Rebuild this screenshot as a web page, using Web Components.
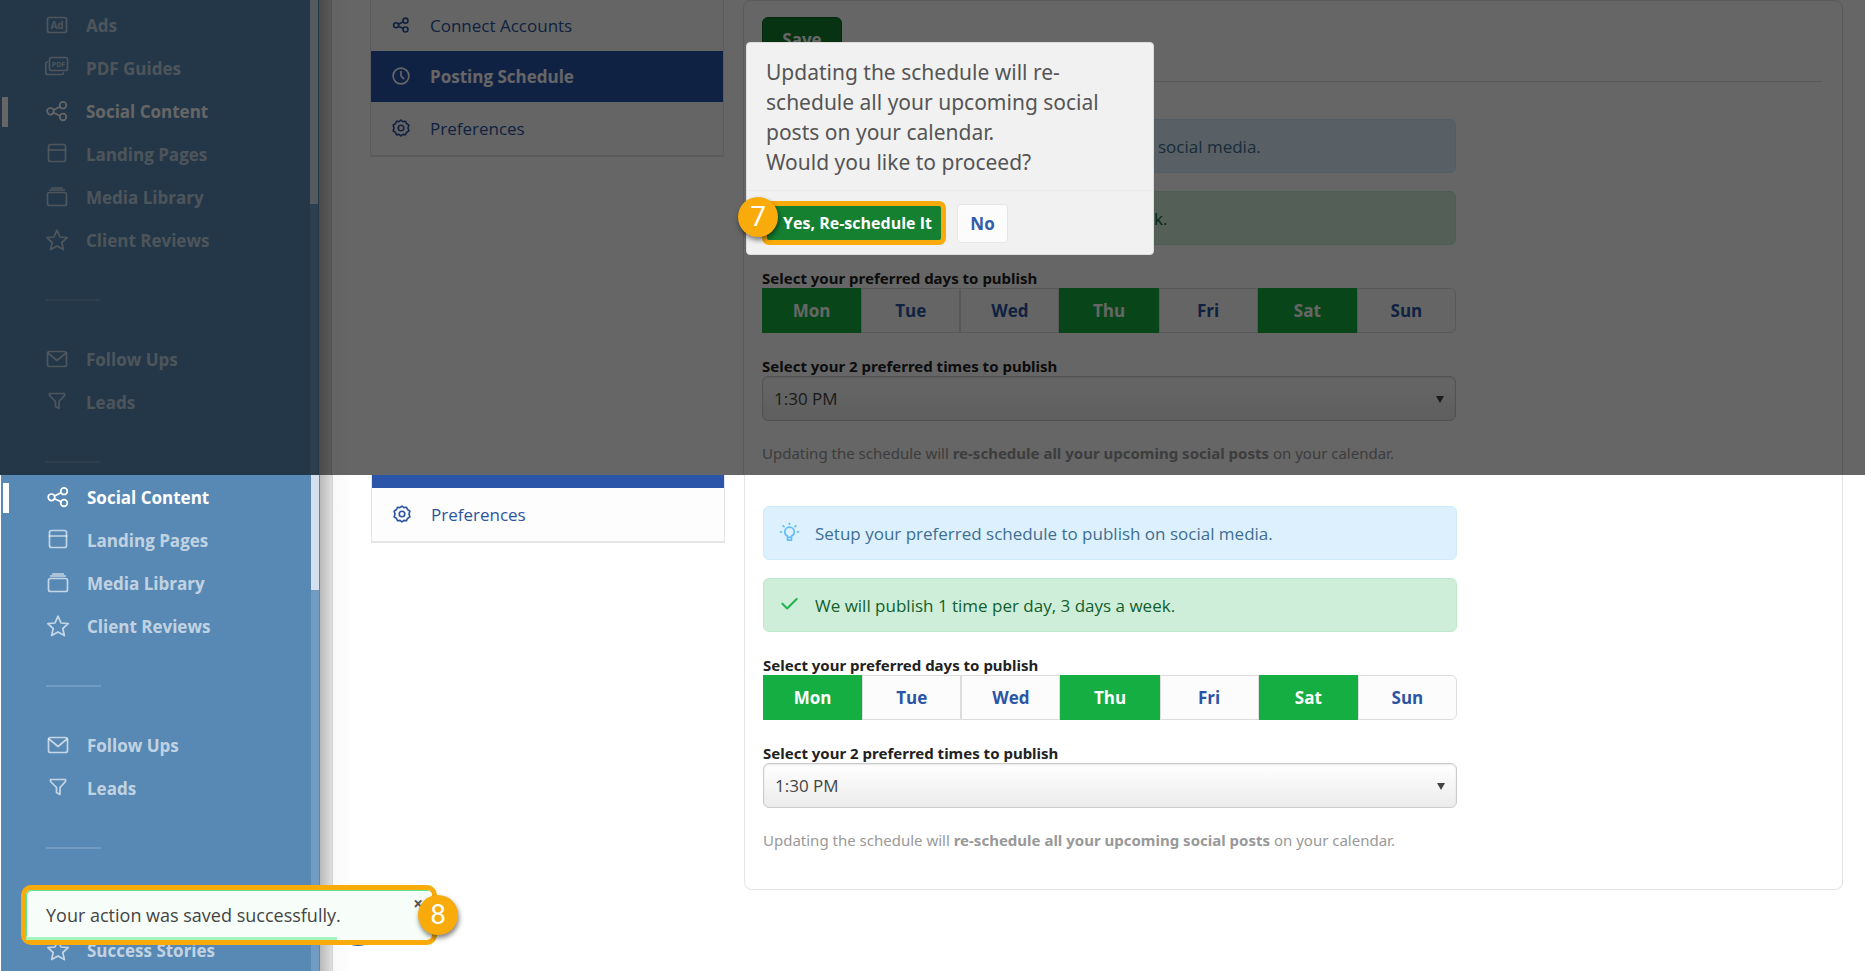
<!DOCTYPE html>
<html lang="en">
<head>
    <meta charset="utf-8">
    <title>Posting Schedule</title>
    <style>
        html, body {
            margin: 0;
            min-height: 100%;
        }
        body {
            display: flex;
            flex-direction: column;
            min-height: 100vh;
            position: relative;
            overflow: hidden;
            background: #fff;
            color: #222;
            font-family: "Open Sans", "Noto Sans", sans-serif;
            font-size: 17px;
        }
        app-pane.last {
            flex: 1;
        }
    </style>
</head>
<body>
    <app-pane dimmed>
        <side-nav slot="nav" thumb="204">
            <nav-item icon="ads">Ads</nav-item>
            <nav-item icon="pdf">PDF Guides</nav-item>
            <nav-item icon="share" active>Social Content</nav-item>
            <nav-item icon="page">Landing Pages</nav-item>
            <nav-item icon="media">Media Library</nav-item>
            <nav-item icon="star">Client Reviews</nav-item>
            <nav-rule></nav-rule>
            <nav-item icon="mail">Follow Ups</nav-item>
            <nav-item icon="funnel">Leads</nav-item>
            <nav-rule></nav-rule>
        </side-nav>
        <sub-menu slot="menu">
            <menu-item icon="share">Connect Accounts</menu-item>
            <menu-item icon="clock" active>Posting Schedule</menu-item>
            <menu-item icon="gear">Preferences</menu-item>
        </sub-menu>
        <schedule-card full>
            <notice-box covered>social media.</notice-box>
            <notice-box covered type="ok">k.</notice-box>
        </schedule-card>
    </app-pane>

    <app-pane class="last">
        <side-nav slot="nav" thumb="115" class="low">
            <nav-item icon="share" active>Social Content</nav-item>
            <nav-item icon="page">Landing Pages</nav-item>
            <nav-item icon="media">Media Library</nav-item>
            <nav-item icon="star">Client Reviews</nav-item>
            <nav-rule></nav-rule>
            <nav-item icon="mail">Follow Ups</nav-item>
            <nav-item icon="funnel">Leads</nav-item>
            <nav-rule></nav-rule>
            <nav-gap></nav-gap>
            <nav-item icon="star">Success Stories</nav-item>
        </side-nav>
        <sub-menu slot="menu" tail>
            <menu-item icon="gear">Preferences</menu-item>
        </sub-menu>
        <schedule-card>
            <notice-box>Setup your preferred schedule to publish on social media.</notice-box>
            <notice-box type="ok">We will publish 1 time per day, 3 days a week.</notice-box>
        </schedule-card>
    </app-pane>

    <confirm-dialog>
        <span>Updating the schedule will re-schedule all your upcoming social posts on your calendar.<br>Would you like to proceed?</span>
        <span slot="yes">Yes, Re-schedule It</span>
        <span slot="no">No</span>
    </confirm-dialog>
    <toast-note>Your action was saved successfully.</toast-note>

    <script>
        const ICONS = {
            ads: `<rect x="2.5" y="4.5" width="19" height="15" rx="2"/>
                <text x="12" y="16" text-anchor="middle" font-size="10" font-weight="700" fill="currentColor" stroke="none">Ad</text>`,
            pdf: `<rect x="4.5" y="1.5" width="18" height="13" rx="2"/><path d="M2.5 6Q.8 6 .8 7.7V16.5Q.8 18.500 2.8 18.5H17Q18.5 18.5 18.5 17"/>
                <text x="13.5" y="10.5" text-anchor="middle" font-size="7" font-weight="700" fill="currentColor" stroke="none">PDF</text>`,
            share: `<circle cx="5.5" cy="12.3" r="3.3"/><circle cx="18" cy="6.2" r="3.3"/><circle cx="18" cy="18" r="3.3"/>
                <path d="M8.5 10.9 15 7.7M8.5 13.7 15 16.7"/>`,
            page: `<rect x="3.5" y="2.5" width="17" height="17" rx="2"/><path d="M3.5 8H20.5"/>`,
            media: `<rect x="2.5" y="7.5" width="19" height="13" rx="2"/><path d="M4.5 5H19.5M6.5 3H17.5" stroke-width="1.3"/>`,
            star: `<path d="M12 2.2 15 9 22.2 9.7 16.8 14.5 18.4 21.6 12 17.9 5.6 21.6 7.2 14.5 1.8 9.7 9 9Z"/>`,
            mail: `<rect x="2.5" y="4.5" width="19" height="15" rx="2"/><path d="M3 6 12 13.5 21 6"/>`,
            funnel: `<path d="M4.5 3.5H19.5V5.5L14 11.5V18.5L10.5 16.5V11.5L4.5 5.5Z"/>`,
            clock: `<circle cx="12" cy="12" r="10.5"/><path d="M12 6V12L15.5 15.5"/>`,
            gear: `<path d="M12 1.5 14.7 3.5 18 3 19.3 6 22.500 8.2 21.3 12 22.5 15.8 19.3 18 18 21 14.7 20.5 12 22.5 9.3 20.5 6 21 4.7 18 1.5 15.8 2.7 12 1.5 8.2 4.7 6 6 3 9.3 3.5Z"/><circle cx="12" cy="12" r="3.7"/>`,
            bulb: `<path d="M9.5 18V16.5Q6 14.8 6 11.3A6 6 0 0 1 18 11.3Q18 14.8 14.5 16.5V18ZM9.5 18V21.5H14.5V18M12 .5V1.5M4 3.5 5 4.500M20 3.5 19 4.5M.8 11.3H1.8M22.2 11.3H23.2"/>`,
            check: `<path d="M3 11 9 17 21 5"/>`,
            caret: `<path d="M0 3H24L12 24Z" fill="currentColor" stroke="none"/>`
        };

        // Every element keeps its own markup and styles in an open shadow root
        function define(name, render, ready) {
            customElements.define(name, class extends HTMLElement {
                connectedCallback() {
                    if (this.shadowRoot) return;
                    this.attachShadow({ mode: 'open' }).innerHTML = render(this);
                    if (ready) ready(this.shadowRoot, this);
                }
            });
        }

        define('ui-icon', el => `
            <style>
                :host { display: block; width: 24px; height: 24px; flex: none; }
                svg { display: block; width: 100%; height: 100%; overflow: visible; fill: none; stroke: currentColor; stroke-width: var(--stroke, 1.7); stroke-linecap: round; stroke-linejoin: round; }
            </style>
            <svg viewBox="0 0 24 24" aria-hidden="true">${ICONS[el.getAttribute('name')]}</svg>`);

        define('app-pane', el => `
            <style>
                :host { display: grid; grid-template-columns: 319px 1fr; position: relative; overflow: hidden; padding-left: 1px; }
                :host([dimmed]) { height: 475px; padding-left: 0; }
                .page {
                    display: grid; grid-template-columns: 354px 1fr; gap: 19px; align-items: start;
                    padding: 0 22px 0 51px;
                    background: linear-gradient(to right, #b9b9b9, #dedede 12px, #d2d2d2 12px, #d2d2d2 13px, #f8f8f8 13px, #fff 32px);
                }
                .shade { position: absolute; inset: 0; background: rgba(0, 0, 0, .6); }
            </style>
            <slot name="nav"></slot>
            <main class="page"><slot name="menu"></slot><slot></slot></main>
            ${el.hasAttribute('dimmed') ? '<div class="shade"></div>' : ''}`);

        define('side-nav', el => `
            <style>
                :host { display: grid; grid-template-columns: 1fr 8px; padding-right: 1px; background: #5889b4; color: #fff; }
                nav { padding-top: 4px; }
                :host(.low) nav { padding-top: 1px; }
                .track { background: #729bc2; }
                .thumb { height: ${el.getAttribute('thumb')}px; background: #d4e0ed; }
            </style>
            <nav><slot></slot></nav>
            <div class="track"><div class="thumb"></div></div>`);

        define('nav-item', el => `
            <style>
                :host { display: block; }
                a {
                    display: flex; align-items: center; height: 43px; padding-left: 2px;
                    color: rgba(255, 255, 255, .65); font-weight: 700; text-decoration: none;
                }
                a::before { content: ""; width: 6px; height: 30px; margin-right: 37px; }
                :host([active]) a { color: #fff; }
                :host([active]) a::before { background: #fff; }
                ui-icon { margin-right: 17px; padding-bottom: 2px; }
            </style>
            <a href="#"><ui-icon name="${el.getAttribute('icon')}"></ui-icon><slot></slot></a>`);

        define('nav-rule', () => `
            <style>
                :host { display: block; padding: 37px 0 37px 45px; }
                div { width: 55px; height: 2px; background: #729bc2; }
            </style>
            <div></div>`);

        define('nav-gap', () => `<style>:host { display: block; height: 43px; }</style>`);

        define('sub-menu', () => `
            <style>
                :host { display: block; border: 1px solid #e4e4e4; border-top: 0; border-bottom-width: 2px; background: #fdfdfd; }
                :host([tail])::before { content: ""; display: block; height: 13px; background: #2a55a8; }
            </style>
            <slot></slot>`);

        define('menu-item', el => `
            <style>
                :host { display: block; --stroke: 2.2; }
                a { display: flex; align-items: center; gap: 20px; height: 51px; padding-left: 21px; color: #2a55a0; text-decoration: none; }
                :host(:last-child) a { height: 53px; }
                :host([active]) a { background: #2a55a8; color: #fff; font-weight: 700; }
                ui-icon { width: 18px; height: 18px; padding-bottom: 2px; }
            </style>
            <a href="#"><ui-icon name="${el.getAttribute('icon')}"></ui-icon><slot></slot></a>`);

        define('notice-box', el => `
            <style>
                :host {
                    --stroke: 2.2;
                    display: flex; align-items: center; gap: 16px; box-sizing: border-box; height: 54px; padding-left: 16px;
                    margin-bottom: 18px; border: 1px solid #cfeafb; border-radius: 6px; background: #dcf1fd; color: #3f6e92;
                }
                ui-icon { width: 19px; height: 19px; padding-bottom: 2px; color: #64bdfb; }
                :host([type="ok"]) { border-color: #bfe8cb; background: #cfeed9; color: #11602d; }
                :host([type="ok"]) ui-icon { color: #22b455; --stroke: 2.6; }
                :host([covered]) { padding-left: 395px; }
                :host([covered][type="ok"]) { padding-left: 391px; }
            </style>
            ${el.hasAttribute('covered') ? '' : `<ui-icon name="${el.getAttribute('type') === 'ok' ? 'check' : 'bulb'}"></ui-icon>`}
            <div><slot></slot></div>`);

        define('day-picker', el => `
            <style>
                :host { display: grid; grid-template-columns: repeat(7, 1fr); }
                button {
                    height: 45px; border: 1px solid #ddd; background: #fcfcfc;
                    color: #2a55a5; font: inherit; font-weight: 700;
                }
                button:first-child { border-radius: 6px 0 0 6px; }
                button:last-child { border-radius: 0 6px 6px 0; }
                button[aria-pressed="true"] { border-color: #15ae42; background: #15ae42; color: #fff; }
            </style>
            ${['Mon', 'Tue', 'Wed', 'Thu', 'Fri', 'Sat', 'Sun'].map(day =>
                `<button type="button" aria-pressed="${el.getAttribute('days').includes(day)}">${day}</button>`).join('')}`,
            root => root.addEventListener('click', evt => {
                const button = evt.target.closest('button');
                if (button) button.setAttribute('aria-pressed', button.getAttribute('aria-pressed') !== 'true');
            }));

        define('schedule-card', el => `
            <style>
                :host {
                    display: block; padding: 31px 20px 38px 18px; border: 1px solid #e4e4e4; border-top: 0;
                    border-radius: 0 0 8px 8px; background: #fff;
                }
                :host([full]) { padding-top: 16px; border-top: 1px solid #e4e4e4; border-radius: 8px; }
                .save {
                    width: 80px; height: 45px; border: 1px solid #0b6a24; border-radius: 6px;
                    background: #148030; color: #fff; font: inherit; font-weight: 700;
                }
                hr { margin: 19px 0 37px; border: 0; border-top: 1px solid #ddd; }
                .fields { max-width: 694px; }
                .label { display: block; margin-top: 23px; font-family: "Noto Sans", sans-serif; font-size: 15px; font-weight: 700; line-height: 20px; }
                .select { position: relative; }
                select {
                    display: block; width: 100%; height: 45px; padding: 0 11px; appearance: none;
                    border: 1px solid #ccc; border-radius: 6px; background: linear-gradient(#fff, #ececec);
                    box-shadow: inset 0 1px 2px rgba(0, 0, 0, .1); color: #444; font: inherit;
                }
                .select ui-icon { position: absolute; right: 12px; top: 19px; width: 8px; height: 8px; color: #444; pointer-events: none; }
                p { margin: 21px 0 0; color: #999; font-family: "Noto Sans", sans-serif; font-size: 15px; line-height: 22px; }
            </style>
            ${el.hasAttribute('full') ? '<button class="save" type="button">Save</button><hr>' : ''}
            <div class="fields">
                <slot></slot>
                <div class="label">Select your preferred days to publish</div>
                <day-picker days="Mon Thu Sat" role="group" aria-label="Days"></day-picker>
                <label class="label" for="time">Select your 2 preferred times to publish</label>
                <div class="select">
                    <select id="time"><option>1:30 PM</option></select>
                    <ui-icon name="caret"></ui-icon>
                </div>
                <p>Updating the schedule will <b>re-schedule all your upcoming social posts</b> on your calendar.</p>
            </div>`);

        define('step-badge', () => `
            <style>
                :host {
                    display: grid; place-items: center; width: 40px; height: 40px; border-radius: 50%;
                    background: #f9ab0b; box-shadow: 1px 3px 5px rgba(0, 0, 0, .5);
                    color: #fff; font-family: Roboto, sans-serif; font-size: 28px; line-height: 40px;
                }
            </style>
            <slot></slot>`);

        define('confirm-dialog', () => `
            <style>
                :host {
                    display: block; position: absolute; left: 746px; top: 42px; box-sizing: border-box; width: 408px;
                    border: 1px solid #ddd; border-radius: 4px; background: #f1f1f1;
                }
                .text { padding: 14px 19px 13px; border-bottom: 1px solid #eaeaea; color: #555; font-family: "Noto Sans", sans-serif; font-size: 21px; line-height: 30px; }
                .actions { position: relative; display: flex; align-items: center; gap: 11px; padding: 10px 15px 9px; }
                button { height: 44px; border: 5px solid #f9ab0b; border-radius: 7px; background: #148030; color: #fff; font: inherit; font-weight: 700; }
                .yes { width: 184px; padding: 0 0 0 7px; font-size: 16px; white-space: nowrap; }
                .no { width: 51px; height: 39px; padding: 0; border: 1px solid #e6e6e6; border-radius: 4px; background: #fcfcfc; color: #2f5cab; }
                step-badge { position: absolute; left: -9px; top: 6px; }
            </style>
            <div class="text"><slot></slot></div>
            <div class="actions">
                <button class="yes" type="button"><slot name="yes"></slot></button>
                <button class="no" type="button"><slot name="no"></slot></button>
                <step-badge>7</step-badge>
            </div>`);

        define('toast-note', () => `
            <style>
                :host { display: block; position: absolute; left: 21px; bottom: 27px; width: 416px; }
                .launcher { position: absolute; left: 312px; bottom: -1px; width: 50px; height: 50px; border: 0; border-radius: 50%; background: #2a55a8; }
                .box {
                    position: relative; box-sizing: border-box; height: 60px; border: 5px solid #f9ab0b; border-radius: 10px;
                    background: #f7fdf9; box-shadow: inset 1px 1px #5fe894; color: #444;
                }
                .text { padding-left: 20px; font-size: 18px; line-height: 50px; }
                .bar { position: absolute; left: 0; bottom: 0; width: 311px; height: 3px; background: #a5f3bd; }
                .close { position: absolute; right: 7px; top: 4px; width: 14px; height: 20px; padding: 0; border: 0; background: none; color: #555; font: inherit; font-weight: 700; line-height: 20px; }
                step-badge { position: absolute; right: -21px; top: 10px; }
            </style>
            <button class="launcher" type="button" aria-label="Help"></button>
            <div class="box" role="status">
                <div class="text"><slot></slot></div>
                <div class="bar"></div>
                <button class="close" type="button" aria-label="Close">×</button>
            </div>
            <step-badge>8</step-badge>`,
            (root, el) => root.querySelector('.close').addEventListener('click', () => el.remove()));
    </script>
</body>
</html>
